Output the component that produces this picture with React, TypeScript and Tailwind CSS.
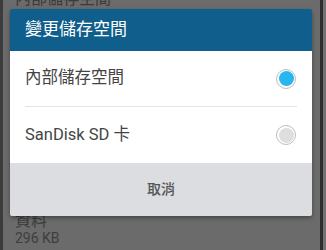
export default function App() {
  const options = [
    { label: '內部儲存空間', checked: true },
    { label: 'SanDisk SD 卡', checked: false },
  ];

  return (
    <div
      className="relative flex h-[250px] w-[326px] overflow-hidden bg-[#6b6b6b]"
      style={{ fontFamily: "Roboto, 'Noto Sans CJK TC', sans-serif" }}
    >
      {/* phone frame edges */}
      <div className="w-[3px] bg-[#3c3c3c]" />
      <div className="flex flex-1 flex-col">
        {/* dimmed page behind the dialog */}
        <div className="mt-[-11px] pl-[12px] text-[16px] leading-[20px] text-[#3a3a3a]">內部儲存空間</div>
        <div className="flex-1" />
        <div className="pl-[12px] text-[16px] leading-[18px] text-[#3a3a3a]">資料</div>
        <div className="mb-[3px] pl-[12px] text-[14px] leading-[17px] text-[#3e3e3e]">296 KB</div>
      </div>
      <div className="w-[2px] bg-[#6b6b6b]" />
      <div className="w-[3px] bg-[#2f2f2f]" />
      <div className="w-[3px] bg-[#737373]" />

      {/* dialog */}
      <div className="absolute left-[10px] top-[9px] w-[302px] overflow-hidden rounded-[2px] shadow-[0_2px_4px_rgba(0,0,0,0.35)]">
        <div className="flex h-[42px] items-center bg-[#105e8b] px-[15px] text-[17px] text-white">變更儲存空間</div>
        <div className="bg-white px-[15px]">
          {options.map((opt, i) => (
            <div
              key={opt.label}
              className={`flex h-[56px] items-center justify-between ${i === 0 ? 'border-b border-[#e4e4e4]' : ''}`}
            >
              <span className="text-[16.5px] text-[#444]">{opt.label}</span>
              <span className="mr-[1px] flex h-[20px] w-[20px] items-center justify-center rounded-full border border-[#bdbdbd] bg-white">
                <span
                  className={`h-[15px] w-[15px] rounded-full ${opt.checked ? 'bg-[#29b6f0]' : 'bg-[#dedede]'}`}
                />
              </span>
            </div>
          ))}
        </div>
        <div className="flex h-[53px] items-center justify-center bg-[#dcdde0] text-[14px] font-medium text-[#555]">
          取消
        </div>
      </div>
    </div>
  );
}
